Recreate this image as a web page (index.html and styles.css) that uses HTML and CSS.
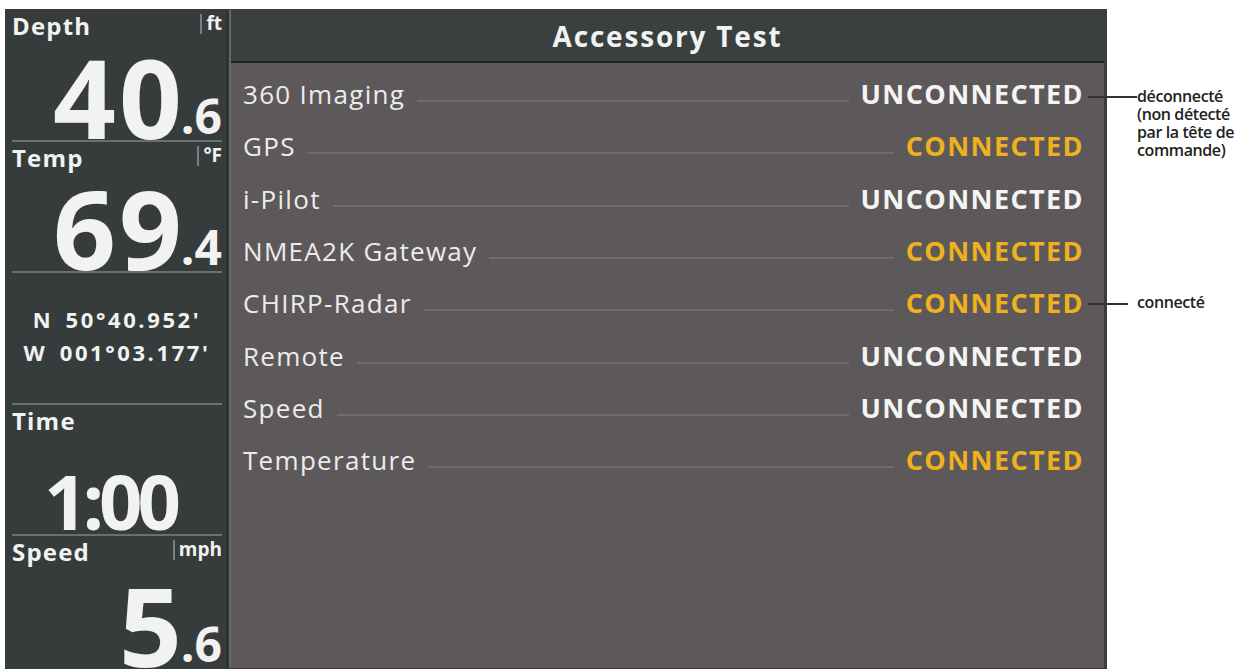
FILE: index.html
```html
<!DOCTYPE html>
<html lang="fr">
<head>
    <meta charset="UTF-8">
    <title>Accessory Test</title>
    <link rel="stylesheet" href="styles.css">
</head>
<body>
    <div class="page">
        <div class="screen">
            <div class="sidebar">
                <div class="box">
                    <div class="box-head"><span class="label">Depth</span><span class="unit">ft</span></div>
                    <div class="value"><span class="big">40</span><span class="dec">.6</span></div>
                </div>
                <div class="box">
                    <div class="box-head"><span class="label">Temp</span><span class="unit">°F</span></div>
                    <div class="value"><span class="big">69</span><span class="dec">.4</span></div>
                </div>
                <div class="box box-pos">
                    <div class="coord">N&nbsp;50°40.952'</div>
                    <div class="coord">W&nbsp;001°03.177'</div>
                </div>
                <div class="box">
                    <div class="box-head"><span class="label">Time</span></div>
                    <div class="value value-time"><span class="time">1:00</span></div>
                </div>
                <div class="box">
                    <div class="box-head"><span class="label">Speed</span><span class="unit">mph</span></div>
                    <div class="value"><span class="big">5</span><span class="dec">.6</span></div>
                </div>
            </div>

            <div class="main">
                <div class="title">Accessory Test</div>
                <ul class="list">
                    <li class="row"><span class="name">360 Imaging</span><span class="dots"></span><span class="status">UNCONNECTED</span></li>
                    <li class="row"><span class="name">GPS</span><span class="dots"></span><span class="status on">CONNECTED</span></li>
                    <li class="row"><span class="name">i-Pilot</span><span class="dots"></span><span class="status">UNCONNECTED</span></li>
                    <li class="row"><span class="name">NMEA2K Gateway</span><span class="dots"></span><span class="status on">CONNECTED</span></li>
                    <li class="row"><span class="name">CHIRP-Radar</span><span class="dots"></span><span class="status on">CONNECTED</span></li>
                    <li class="row"><span class="name">Remote</span><span class="dots"></span><span class="status">UNCONNECTED</span></li>
                    <li class="row"><span class="name">Speed</span><span class="dots"></span><span class="status">UNCONNECTED</span></li>
                    <li class="row"><span class="name">Temperature</span><span class="dots"></span><span class="status on">CONNECTED</span></li>
                </ul>
            </div>
        </div>

        <!-- légendes -->
        <div class="callout callout-off">
            <span class="leader"></span>
            <span class="note">déconnecté<br>(non détecté<br>par la tête de<br>commande)</span>
        </div>
        <div class="callout callout-on">
            <span class="leader"></span>
            <span class="note">connecté</span>
        </div>
    </div>
</body>
</html>
```

FILE: styles.css
```css
* {
    margin: 0;
    padding: 0;
    box-sizing: border-box;
}

body {
    background-color: #fff;
    font-family: 'Open Sans', 'DejaVu Sans', sans-serif;
    color: #f2f2f2;
}

.page {
    position: relative;
    width: 1251px;
    height: 671px;
    padding: 9px 0 0 5px;
}

.screen {
    display: flex;
    width: 1102px;
    height: 660px;
    background-color: #2f3332;
    border: 1px solid #3a3d3c;
}

/* colonne de gauche */
.sidebar {
    width: 220px;
    display: grid;
    grid-template-rows: repeat(5, 1fr);
    background-color: #363c3b;
    padding: 0 4px 0 6px;
}

.box {
    display: flex;
    flex-direction: column;
    border-bottom: 2px solid #6b706e;
}

.box:last-child {
    border-bottom: none;
}

.box-head {
    display: flex;
    justify-content: space-between;
    align-items: flex-start;
    height: 30px;
    padding-top: 3px;
}

.label {
    font-size: 24px;
    font-weight: 700;
    line-height: 26px;
    letter-spacing: 1.2px;
}

.unit {
    font-size: 19px;
    font-weight: 700;
    line-height: 18px;
    border-left: 2px solid #7a7f7d;
    padding: 0 0 2px 4px;
    margin-top: 1px;
}

.value {
    flex: 1;
    display: flex;
    justify-content: flex-end;
    align-items: flex-end;
    padding-bottom: 2px;
}

.big {
    font-size: 110px;
    font-weight: 700;
    line-height: 84px;
    letter-spacing: 3px;
}

.dec {
    font-size: 48px;
    font-weight: 700;
    line-height: 40px;
    margin-left: -4px;
    margin-bottom: 2px;
}

.value-time {
    justify-content: center;
    padding-right: 14px;
}

.time {
    font-size: 76px;
    font-weight: 700;
    line-height: 62px;
    letter-spacing: -5px;
}

.box-pos {
    justify-content: center;
    align-items: center;
    padding-bottom: 4px;
    gap: 7px;
}

.coord {
    font-size: 22px;
    font-weight: 700;
    line-height: 26px;
    letter-spacing: 2.6px;
    word-spacing: 4px;
}

/* zone principale */
.main {
    flex: 1;
    display: flex;
    flex-direction: column;
    margin-left: 3px;
    background-color: #5d595a;
    border-left: 2px solid #666867;
    border-right: 2px solid #3b3d3d;
}

.title {
    height: 53px;
    background-color: #3a403e;
    border-bottom: 2px solid #1f2221;
    text-align: center;
    font-size: 28px;
    font-weight: 700;
    line-height: 52px;
    letter-spacing: 1.8px;
}

.list {
    list-style: none;
    padding: 5px 20px 0 12px;
}

.row {
    display: flex;
    align-items: center;
    height: 52.3px;
}

.name {
    font-size: 26px;
    line-height: 30px;
    color: #ececec;
    letter-spacing: 1.3px;
}

.dots {
    flex: 1;
    height: 2px;
    background-color: #6f6c6d;
    margin: 14px 12px 0;
}

.status {
    font-size: 27px;
    font-weight: 700;
    line-height: 30px;
    color: #f4f4f4;
    letter-spacing: 1.4px;
}

.status.on {
    color: #efb11e;
}

/* légendes */
.callout {
    position: absolute;
    left: 1088px;
    display: flex;
    align-items: flex-start;
}

.callout-off {
    top: 86px;
}

.callout-on {
    top: 292px;
}

.leader {
    width: 49px;
    height: 2px;
    margin-top: 10px;
    background-color: #333;
}

.callout-on .leader {
    width: 40px;
    margin-top: 11px;
    margin-right: 9px;
}

.note {
    font-size: 16px;
    font-weight: 600;
    line-height: 18px;
    color: #222;
    letter-spacing: -0.4px;
    margin-top: 1px;
}
```
